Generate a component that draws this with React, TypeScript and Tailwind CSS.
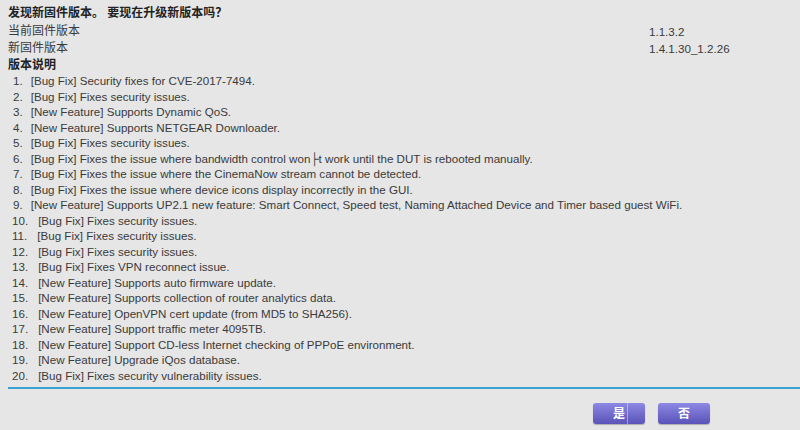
const notes = [
  "[Bug Fix] Security fixes for CVE-2017-7494.",
  "[Bug Fix] Fixes security issues.",
  "[New Feature] Supports Dynamic QoS.",
  "[New Feature] Supports NETGEAR Downloader.",
  "[Bug Fix] Fixes security issues.",
  "[Bug Fix] Fixes the issue where bandwidth control won├t work until the DUT is rebooted manually.",
  "[Bug Fix] Fixes the issue where the CinemaNow stream cannot be detected.",
  "[Bug Fix] Fixes the issue where device icons display incorrectly in the GUI.",
  "[New Feature] Supports UP2.1 new feature: Smart Connect, Speed test, Naming Attached Device and Timer based guest WiFi.",
  "[Bug Fix] Fixes security issues.",
  "[Bug Fix] Fixes security issues.",
  "[Bug Fix] Fixes security issues.",
  "[Bug Fix] Fixes VPN reconnect issue.",
  "[New Feature] Supports auto firmware update.",
  "[New Feature] Supports collection of router analytics data.",
  "[New Feature] OpenVPN cert update (from MD5 to SHA256).",
  "[New Feature] Support traffic meter 4095TB.",
  "[New Feature] Support CD-less Internet checking of PPPoE environment.",
  "[New Feature] Upgrade iQos database.",
  "[Bug Fix] Fixes security vulnerability issues.",
];

function PurpleButton({ label, split }: { label: string; split?: boolean }) {
  return (
    <button className="relative h-[21px] w-[52px] rounded-[3px] bg-gradient-to-b from-[#8d88e2] to-[#5b53b9] text-[12px] font-semibold text-white shadow-[0_1px_1px_rgba(0,0,0,0.25)]">
      {label}
      {split && (
        <span className="absolute right-[17px] top-0 h-full w-px bg-white/40" />
      )}
    </button>
  );
}

export default function App() {
  return (
    <div
      className="h-[430px] w-[800px] overflow-hidden bg-[#e6e6e6] pt-[4px] text-[11.6px] text-[#3a3a3a]"
      style={{ fontFamily: '"Liberation Sans", Arial, "Noto Sans CJK SC", sans-serif' }}
    >
      <div className="pl-[8px]">
        <div className="h-[19px] text-[12px] font-bold leading-[19px] text-[#222]">
          发现新固件版本。 要现在升级新版本吗？
        </div>
        <div className="flex h-[17px] leading-[17px]">
          <span className="w-[641px] text-[12px]">当前固件版本</span>
          <span>1.1.3.2</span>
        </div>
        <div className="flex h-[17px] leading-[17px]">
          <span className="w-[641px] text-[12px]">新固件版本</span>
          <span>1.4.1.30_1.2.26</span>
        </div>
        <div className="h-[16px] text-[12px] font-bold leading-[16px] text-[#222]">
          版本说明
        </div>
      </div>

      <ol className="leading-[15.5px]">
        {notes.map((note, i) => (
          <li
            key={i}
            className={`flex whitespace-nowrap ${i < 9 ? "pl-[13px]" : "pl-[12px]"}`}
          >
            <span className={i < 9 ? "mr-[8px]" : "mr-[10px]"}>{i + 1}.</span>
            <span>{note}</span>
          </li>
        ))}
      </ol>

      <div className="ml-[8px] mt-[4px] h-[2px] bg-[#3aa3d3]" />

      <div className="mt-[14px] flex gap-[13px] pl-[593px]">
        <PurpleButton label="是" split />
        <PurpleButton label="否" />
      </div>
    </div>
  );
}
